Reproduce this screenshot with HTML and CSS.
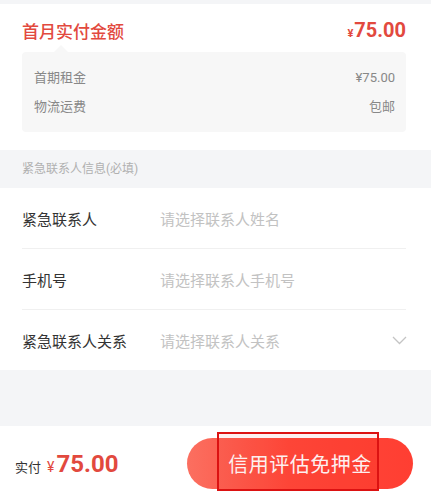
FILE: index.html
```html
<!DOCTYPE html>
<html lang="zh-CN">

<head>
    <meta charset="UTF-8" />
    <meta name="viewport" content="width=device-width, initial-scale=1" />
    <title>确认订单</title>
    <link rel="stylesheet" href="styles.css">
</head>

<body>
    <div class="page">
        <div class="card">
            <div class="card-head">
                <span class="card-title">首月实付金额</span>
                <span class="card-price"><small>¥</small>75.00</span>
            </div>
            <div class="detail">
                <div class="detail-row">
                    <span>首期租金</span>
                    <span>¥75.00</span>
                </div>
                <div class="detail-row">
                    <span>物流运费</span>
                    <span>包邮</span>
                </div>
            </div>
        </div>

        <div class="section-title">紧急联系人信息(必填)</div>

        <div class="form">
            <div class="form-row">
                <span class="form-label">紧急联系人</span>
                <span class="form-input">请选择联系人姓名</span>
            </div>
            <div class="form-row">
                <span class="form-label">手机号</span>
                <span class="form-input">请选择联系人手机号</span>
            </div>
            <div class="form-row">
                <span class="form-label">紧急联系人关系</span>
                <span class="form-input">请选择联系人关系</span>
                <svg class="arrow" width="15" height="9" viewBox="0 0 15 9">
                    <path d="M1 1 L7.5 7.5 L14 1" fill="none" stroke="#c4c4c4" stroke-width="1.3" />
                </svg>
            </div>
        </div>

        <div class="spacer"></div>

        <div class="bottom-bar">
            <div class="total">
                <span class="total-label">实付</span>
                <span class="total-yen">¥</span>
                <span class="total-num">75.00</span>
            </div>
            <div class="btn-wrap">
                <button class="btn-submit">信用评估免押金</button>
                <div class="highlight"></div>
            </div>
        </div>
    </div>
</body>

</html>
```

FILE: styles.css
```css
* {
    box-sizing: border-box;
}

body {
    margin: 0;
    font-family: Roboto, "Noto Sans CJK SC", sans-serif;
    background-color: #f4f5f7;
    color: #333;
}

.page {
    width: 431px;
    height: 499px;
    padding-top: 4px;
    display: flex;
    flex-direction: column;
}

.card {
    background-color: #fff;
    padding: 14px 25px 18px 22px;
}

.card-head {
    display: flex;
    justify-content: space-between;
    align-items: center;
    height: 24px;
}

.card-title {
    font-size: 17px;
    font-weight: 500;
    color: #e2493e;
}

.card-price {
    font-size: 20px;
    font-weight: bold;
    color: #e2493e;
}

.card-price small {
    font-size: 11px;
    margin-right: 1px;
}

.detail {
    position: relative;
    margin-top: 10px;
    padding: 16px 11px 15px 12px;
    background-color: #f7f7f7;
    border-radius: 4px;
}

.detail::before {
    content: "";
    position: absolute;
    top: -7px;
    left: 32px;
    border-left: 7px solid transparent;
    border-right: 7px solid transparent;
    border-bottom: 7px solid #f7f7f7;
}

.detail-row {
    display: flex;
    justify-content: space-between;
    height: 20px;
    line-height: 20px;
    font-size: 13px;
    color: #888;
}

.detail-row + .detail-row {
    margin-top: 9px;
}

.section-title {
    height: 38px;
    line-height: 38px;
    padding-left: 22px;
    font-size: 12px;
    color: #b0b0b0;
}

.form {
    background-color: #fff;
    padding: 0 25px 0 22px;
}

.form-row {
    display: flex;
    align-items: center;
    height: 61px;
    border-bottom: 1px solid #f0f0f0;
}

.form-row:last-child {
    height: 60px;
    border-bottom: none;
}

.form-label {
    width: 138px;
    font-size: 15px;
    color: #333;
}

.form-input {
    flex: 1;
    font-size: 15px;
    color: #c2c2c2;
}

.arrow {
    margin-right: -1px;
}

.spacer {
    height: 56px;
}

.bottom-bar {
    flex: 1;
    display: flex;
    justify-content: space-between;
    align-items: center;
    padding: 2px 18px 0 15px;
    background-color: #fff;
}

.total {
    display: flex;
    align-items: baseline;
}

.total-label {
    font-size: 13px;
    color: #333;
}

.total-yen {
    margin-left: 6px;
    font-size: 14px;
    color: #e2493e;
}

.total-num {
    margin-left: 2px;
    font-size: 24px;
    font-weight: bold;
    color: #e2493e;
}

.btn-wrap {
    position: relative;
}

.btn-submit {
    display: block;
    width: 226px;
    height: 51px;
    border: none;
    border-radius: 26px;
    background: linear-gradient(90deg, #fb6f60 0%, #ff4a3b 45%, #ff3e32 100%);
    color: #fff;
    font-family: "Noto Sans CJK SC", sans-serif;
    font-size: 20px;
    letter-spacing: 0.5px;
}

.highlight {
    position: absolute;
    top: -6px;
    bottom: -2px;
    left: 30px;
    width: 162px;
    border: 2px solid #dc1212;
    background-color: rgba(225, 0, 0, 0.06);
}
```
